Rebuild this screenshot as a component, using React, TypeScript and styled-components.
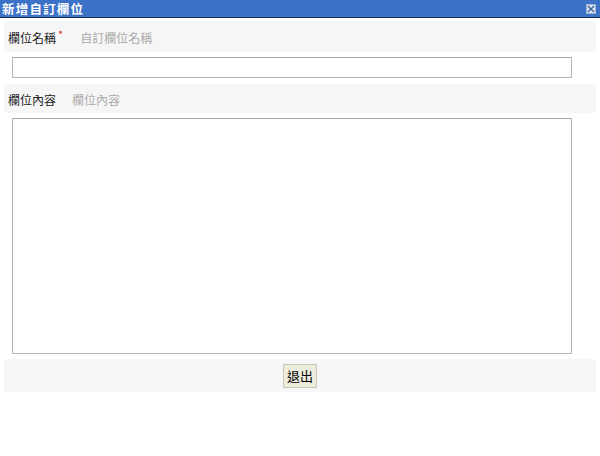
import React from "react";
import styled, { createGlobalStyle } from "styled-components";

const Global = createGlobalStyle`
  html, body { margin: 0; padding: 0; background: #fff; }
  body { font-family: "Noto Sans CJK TC", "Liberation Sans", sans-serif; }
`;

const Dialog = styled.div`
  width: 600px;
  display: flex;
  flex-direction: column;
`;

const TitleBar = styled.div`
  height: 17px;
  background: #3b72c7;
  border-bottom: 1px solid #1d2f52;
  display: flex;
  align-items: center;
  justify-content: space-between;
  padding: 0 4px 0 2px;
  overflow: hidden;
`;

const Title = styled.span`
  color: #fff;
  font-weight: bold;
  font-size: 12.5px;
  letter-spacing: 1.2px;
  line-height: 15px;
  display: block;
`;

const CloseBox = styled.div`
  width: 10px;
  height: 10px;
  background: #d7e1ef;
  border: 1px solid #9fb3d3;
  box-sizing: border-box;
  display: flex;
  align-items: center;
  justify-content: center;
`;

const Body = styled.div`
  padding: 3px 4px 0 4px;
  display: flex;
  flex-direction: column;
`;

const LabelRow = styled.div<{ $h: number }>`
  height: ${(p) => p.$h}px;
  background: #f6f6f6;
  display: flex;
  align-items: center;
  padding-left: 4px;
  padding-top: 1px;
  box-sizing: border-box;
  font-size: 12px;
`;

const Label = styled.span`
  color: #1a1a1a;
`;

const Req = styled.span`
  color: #d33;
  margin-left: 2px;
  position: relative;
  top: -3px;
  font-size: 11px;
`;

const Hint = styled.span<{ $ml: number }>`
  color: #aaa;
  margin-left: ${(p) => p.$ml}px;
`;

const FieldRow = styled.div<{ $pt: number; $pb: number }>`
  padding: ${(p) => p.$pt}px 24px ${(p) => p.$pb}px 8px;
  display: flex;
`;

const TextInput = styled.input`
  width: 560px;
  height: 21px;
  box-sizing: border-box;
  border: 1px solid #b5b5b5;
  border-top-color: #a8a8a8;
  padding: 0 3px;
  margin: 0;
  outline: none;
  font-size: 12px;
  background: #fff;
`;

const TextArea = styled.textarea`
  width: 560px;
  height: 236px;
  box-sizing: border-box;
  border: 1px solid #b5b5b5;
  border-top-color: #a8a8a8;
  margin: 0;
  padding: 2px;
  resize: none;
  outline: none;
  background: #fff;
  display: block;
`;

const ButtonRow = styled.div`
  height: 33px;
  background: #f6f6f6;
  display: flex;
  align-items: center;
  justify-content: center;
`;

const Button = styled.button`
  width: 34px;
  height: 24px;
  padding: 0;
  background: #eeecdc;
  border: 1px solid #c8c6b6;
  font-family: "Noto Sans CJK TC", sans-serif;
  font-size: 13px;
  color: #000;
  line-height: 20px;
`;

export default function App() {
  return (
    <>
      <Global />
      <Dialog>
        <TitleBar>
          <Title>新增自訂欄位</Title>
          <CloseBox>
            <svg width="8" height="8" viewBox="0 0 8 8">
              <path d="M1 1L7 7M7 1L1 7" stroke="#3b5f98" strokeWidth="1.3" />
            </svg>
          </CloseBox>
        </TitleBar>
        <Body>
          <LabelRow $h={31}>
            <Label>欄位名稱</Label>
            <Req>*</Req>
            <Hint $ml={17}>自訂欄位名稱</Hint>
          </LabelRow>
          <FieldRow $pt={5} $pb={6}>
            <TextInput />
          </FieldRow>
          <LabelRow $h={29}>
            <Label>欄位內容</Label>
            <Hint $ml={16}>欄位內容</Hint>
          </LabelRow>
          <FieldRow $pt={5} $pb={5}>
            <TextArea />
          </FieldRow>
          <ButtonRow>
            <Button>退出</Button>
          </ButtonRow>
        </Body>
      </Dialog>
    </>
  );
}
